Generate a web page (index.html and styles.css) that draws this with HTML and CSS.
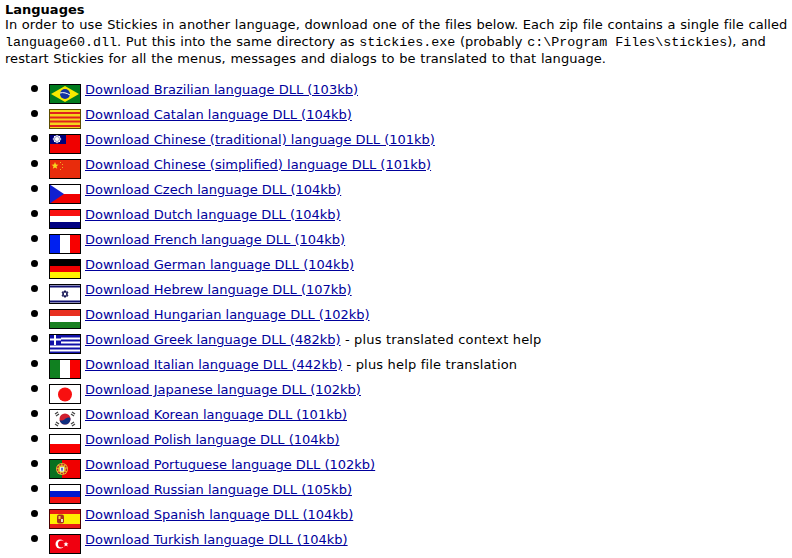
FILE: index.html
```html
<!DOCTYPE html>
<html lang="en">
<head>
<meta charset="utf-8">
<title>Languages</title>
<link rel="stylesheet" href="styles.css">
</head>
<body>
<section class="intro">
<h1 class="title">Languages</h1>
<p class="text">In order to use Stickies in another language, download one of the files below. Each zip file contains a single file called <code class="code">language60.dll</code>. Put this into the same directory as <code class="code">stickies.exe</code> (probably <code class="code">c:\Program Files\stickies</code>), and restart Stickies for all the menus, messages and dialogs to be translated to that language.</p>
</section>
<ul class="langs">
<li class="lang"><svg class="flag" viewBox="0 0 32 20"><rect width="32" height="20" fill="#007a1e"/><path d="M16 2 30 10 16 18 2 10Z" fill="#f5e900"/><circle cx="16" cy="10" r="5" fill="#1030a0"/><path d="M11 9c3-1 7 0 10 2" stroke="#fff" fill="none"/><rect x=".5" y=".5" width="31" height="19" fill="none" stroke="#000"/></svg><a href="#">Download Brazilian language DLL (103kb)</a></li>
<li class="lang"><svg class="flag" viewBox="0 0 32 20"><rect width="32" height="20" fill="#f6d21c"/><path d="M0 3h32v2H0zM0 7.500h32v2H0zM0 11.500h32v2H0zM0 16h32v2H0z" fill="#e0201c"/><rect x=".5" y=".5" width="31" height="19" fill="none" stroke="#5a4a00"/></svg><a href="#">Download Catalan language DLL (104kb)</a></li>
<li class="lang"><svg class="flag" viewBox="0 0 32 20"><rect width="32" height="20" fill="#f00000"/><rect width="17" height="10" fill="#00007a"/><circle cx="8" cy="5" r="3.500" fill="#fff"/><path d="M8 .8v8.400M3.800 5h8.400M5 2l6 6M11 2 5 8" stroke="#fff"/><circle cx="8" cy="5" r="2.500" fill="#fff" stroke="#00007a" stroke-width=".4"/><rect x=".5" y=".5" width="31" height="19" fill="none" stroke="#000"/></svg><a href="#">Download Chinese (traditional) language DLL (101kb)</a></li>
<li class="lang"><svg class="flag" viewBox="0 0 32 20"><rect width="32" height="20" fill="#e82c0c"/><path d="M6 3l1 2.500 2.500.2-2 1.600.7 2.500L6 8.400 3.800 9.800l.7-2.500-2-1.600L5 5.500Z" fill="#f8d820"/><path d="M11 3h1v1h-1zM13 5h1v1h-1zM13 8h1v1h-1zM11 10h1v1h-1z" fill="#f0b020"/><rect x=".5" y=".5" width="31" height="19" fill="none" stroke="#000"/></svg><a href="#">Download Chinese (simplified) language DLL (101kb)</a></li>
<li class="lang"><svg class="flag" viewBox="0 0 32 20"><rect width="32" height="10" fill="#fff"/><rect y="10" width="32" height="10" fill="#f00000"/><path d="M0 0 15 10 0 20Z" fill="#1020d0"/><rect x=".5" y=".5" width="31" height="19" fill="none" stroke="#000"/></svg><a href="#">Download Czech language DLL (104kb)</a></li>
<li class="lang"><svg class="flag" viewBox="0 0 32 20"><rect width="32" height="7" fill="#f81010"/><rect y="7" width="32" height="6" fill="#fff"/><rect y="13" width="32" height="7" fill="#000080"/><rect x=".5" y=".5" width="31" height="19" fill="none" stroke="#000"/></svg><a href="#">Download Dutch language DLL (104kb)</a></li>
<li class="lang"><svg class="flag" viewBox="0 0 32 20"><rect width="11" height="20" fill="#0020f0"/><rect x="11" width="10" height="20" fill="#fff"/><rect x="21" width="11" height="20" fill="#f80000"/><rect x=".5" y=".5" width="31" height="19" fill="none" stroke="#000"/></svg><a href="#">Download French language DLL (104kb)</a></li>
<li class="lang"><svg class="flag" viewBox="0 0 32 20"><rect width="32" height="7" fill="#000"/><rect y="7" width="32" height="6" fill="#f00000"/><rect y="13" width="32" height="7" fill="#fff000"/><rect x=".5" y=".5" width="31" height="19" fill="none" stroke="#000"/></svg><a href="#">Download German language DLL (104kb)</a></li>
<li class="lang"><svg class="flag" viewBox="0 0 32 20"><rect width="32" height="20" fill="#fff"/><path d="M0 1.500h32v2H0zM0 16.500h32v2H0z" fill="#101070"/><path d="M16 6.500 19 12h-6ZM16 13.500 13 8h6Z" fill="none" stroke="#101050"/><rect x=".5" y=".5" width="31" height="19" fill="none" stroke="#000"/></svg><a href="#">Download Hebrew language DLL (107kb)</a></li>
<li class="lang"><svg class="flag" viewBox="0 0 32 20"><rect width="32" height="7" fill="#e83020"/><rect y="7" width="32" height="6" fill="#fff"/><rect y="13" width="32" height="7" fill="#1a8020"/><rect x=".5" y=".5" width="31" height="19" fill="none" stroke="#000"/></svg><a href="#">Download Hungarian language DLL (102kb)</a></li>
<li class="lang"><svg class="flag" viewBox="0 0 32 20"><rect width="32" height="20" fill="#1010a8"/><path d="M12 3.500h20v2H12zM12 7.500h20v2H12zM0 11.500h32v2H0zM0 15.500h32v2H0z" fill="#fff"/><path d="M5 0h2v11H5zM0 4.500h12v2H0z" fill="#fff"/><rect x=".5" y=".5" width="31" height="19" fill="none" stroke="#000"/></svg><a href="#">Download Greek language DLL (482kb)</a><span class="note"> - plus translated context help</span></li>
<li class="lang"><svg class="flag" viewBox="0 0 32 20"><rect width="11" height="20" fill="#108020"/><rect x="11" width="10" height="20" fill="#fff"/><rect x="21" width="11" height="20" fill="#f80000"/><rect x=".5" y=".5" width="31" height="19" fill="none" stroke="#000"/></svg><a href="#">Download Italian language DLL (442kb)</a><span class="note"> - plus help file translation</span></li>
<li class="lang"><svg class="flag" viewBox="0 0 32 20"><rect width="32" height="20" fill="#fff"/><circle cx="16" cy="10.500" r="7" fill="#f81010"/><rect x=".5" y=".5" width="31" height="19" fill="none" stroke="#000"/></svg><a href="#">Download Japanese language DLL (102kb)</a></li>
<li class="lang"><svg class="flag" viewBox="0 0 32 20"><rect width="32" height="20" fill="#fff"/><circle cx="16" cy="10" r="5.500" fill="#d02030"/><path d="M10.500 10a5.500 5.500 0 0 0 11 0c0-2-3-2-5.500 0s-5.500 2-5.500 0Z" fill="#103080"/><path d="M6 5 9 3M7 7 10 5M23 3l3 2M22 5l3 2M6 15l3 2M7 13l3 2M23 17l3-2M22 15l3-2" stroke="#444" stroke-width="1.300"/><rect x=".5" y=".5" width="31" height="19" fill="none" stroke="#000"/></svg><a href="#">Download Korean language DLL (101kb)</a></li>
<li class="lang"><svg class="flag" viewBox="0 0 32 20"><rect width="32" height="10" fill="#fff"/><rect y="10" width="32" height="10" fill="#f80000"/><rect x=".5" y=".5" width="31" height="19" fill="none" stroke="#000"/></svg><a href="#">Download Polish language DLL (104kb)</a></li>
<li class="lang"><svg class="flag" viewBox="0 0 32 20"><rect width="13" height="20" fill="#0a7020"/><rect x="13" width="19" height="20" fill="#f00000"/><circle cx="13" cy="10" r="6" fill="#e8c830"/><circle cx="13" cy="10" r="4.500" fill="none" stroke="#c02030" stroke-width="1.500" stroke-dasharray="2 1"/><rect x="11" y="8" width="4" height="4.500" fill="#f0f0f0"/><rect x="12.300" y="8.800" width="1.400" height="2.800" fill="#2040a0"/><rect x=".5" y=".5" width="31" height="19" fill="none" stroke="#000"/></svg><a href="#">Download Portuguese language DLL (102kb)</a></li>
<li class="lang"><svg class="flag" viewBox="0 0 32 20"><rect width="32" height="7" fill="#fff"/><rect y="7" width="32" height="6" fill="#0018d0"/><rect y="13" width="32" height="7" fill="#f01010"/><rect x=".5" y=".5" width="31" height="19" fill="none" stroke="#000"/></svg><a href="#">Download Russian language DLL (105kb)</a></li>
<li class="lang"><svg class="flag" viewBox="0 0 32 20"><rect width="32" height="20" fill="#e81c14"/><rect y="5" width="32" height="10" fill="#ffee00"/><rect x="8" y="5.500" width="7" height="9" rx="2" fill="#a83020"/><rect x="9.500" y="7" width="2" height="3" fill="#f0d040"/><rect x="12" y="10" width="2" height="3" fill="#e8e0c0"/><rect x=".5" y=".5" width="31" height="19" fill="none" stroke="#400"/></svg><a href="#">Download Spanish language DLL (104kb)</a></li>
<li class="lang"><svg class="flag" viewBox="0 0 32 20"><rect width="32" height="20" fill="#f00010"/><circle cx="11" cy="10" r="4.500" fill="#fff"/><circle cx="12.500" cy="10" r="3.500" fill="#f00010"/><path d="M17 7.500l.7 1.800 1.800.1-1.400 1.200.5 1.900-1.600-1-1.600 1 .5-1.900-1.400-1.200 1.800-.1Z" fill="#fff"/><rect x=".5" y=".5" width="31" height="19" fill="none" stroke="#000"/></svg><a href="#">Download Turkish language DLL (104kb)</a></li>
</ul>
</body>
</html>
```
FILE: styles.css
```css
html, body {
  background: #fff;
}
body {
  margin: 0;
  padding: 2px 0 0 5px;
  font-family: "DejaVu Sans", Verdana, sans-serif;
  font-size: 13px;
  line-height: 16.4px;
  color: #000;
  overflow: hidden;
}
.title {
  margin: 0;
  font-size: inherit;
  line-height: 15.4px;
  font-weight: bold;
}
.text {
  margin: 0;
  word-spacing: 0.5px;
  letter-spacing: 0.05px;
}
.code {
  font-family: "Liberation Mono", "Courier New", monospace;
  font-size: 13.33px;
  word-spacing: 0;
  letter-spacing: 0;
}
.langs {
  margin: 14px 0 0;
  padding: 0 0 0 44px;
  list-style: none;
}
.lang {
  position: relative;
  height: 25.05px;
  line-height: 16px;
}
.lang::before {
  content: "";
  position: absolute;
  left: -18px;
  top: 3px;
  width: 7px;
  height: 7px;
  border-radius: 50%;
  background: #000;
}
.flag {
  display: inline-block;
  width: 32px;
  height: 20px;
  margin-right: 4px;
  vertical-align: -10px;
}
.note {
  letter-spacing: 0.17px;
}
a {
  color: #00009c;
  text-decoration: underline;
}
```
